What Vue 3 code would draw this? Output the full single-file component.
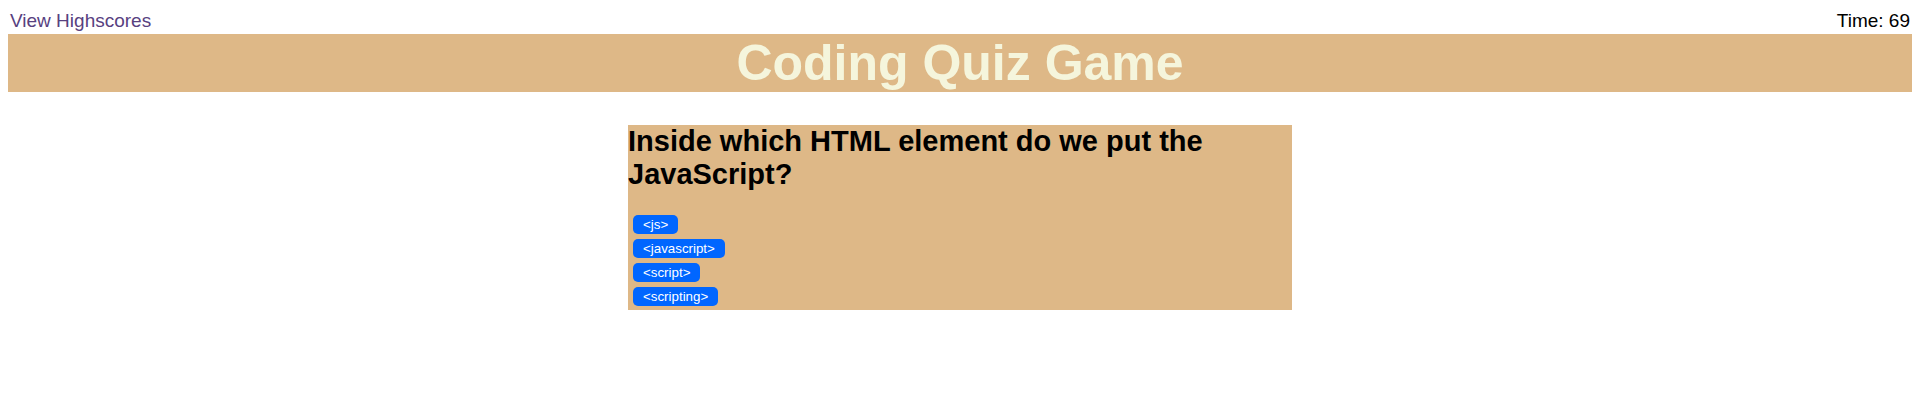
<script setup>
const answers = ['<js>', '<javascript>', '<script' + '>', '<scripting>']
const time = 69
</script>

<template>
  <div class="page">
    <header class="top">
      <a class="scores" href="#highscores">View Highscores</a>
      <span>Time: {{ time }}</span>
    </header>
    <h1 class="title">Coding Quiz Game</h1>
    <main class="quiz">
      <h2 class="question">Inside which HTML element do we put the JavaScript?</h2>
      <div class="answers">
        <button v-for="a in answers" :key="a" type="button" class="answer">{{ a }}</button>
      </div>
    </main>
  </div>
</template>

<style scoped>
.page {
  padding: 8px 4px 0 8px;
  font-family: "Liberation Sans", Arial, sans-serif;
  color: #000;
}
.top {
  display: flex;
  justify-content: space-between;
  padding: 0 2px;
  font-size: 19px;
  line-height: 26px;
}
.scores {
  color: #58417f;
  text-decoration: none;
}
.title {
  margin: 0;
  background: burlywood;
  color: beige;
  font-size: 50px;
  line-height: 58px;
  text-align: center;
}
.quiz {
  box-sizing: border-box;
  width: 664px;
  max-width: 100%;
  margin: 33px auto 0;
  padding-bottom: 4px;
  background: burlywood;
}
.question {
  margin: 0;
  font-size: 29px;
  line-height: 33px;
}
.answers {
  display: flex;
  flex-direction: column;
  align-items: flex-start;
  gap: 5px;
  padding: 24px 5px 0;
}
.answer {
  height: 19px;
  padding: 0 10px;
  border: 0;
  border-radius: 5px;
  background: #0066ff;
  color: #fff;
  font-family: inherit;
  line-height: 19px;
}
</style>
